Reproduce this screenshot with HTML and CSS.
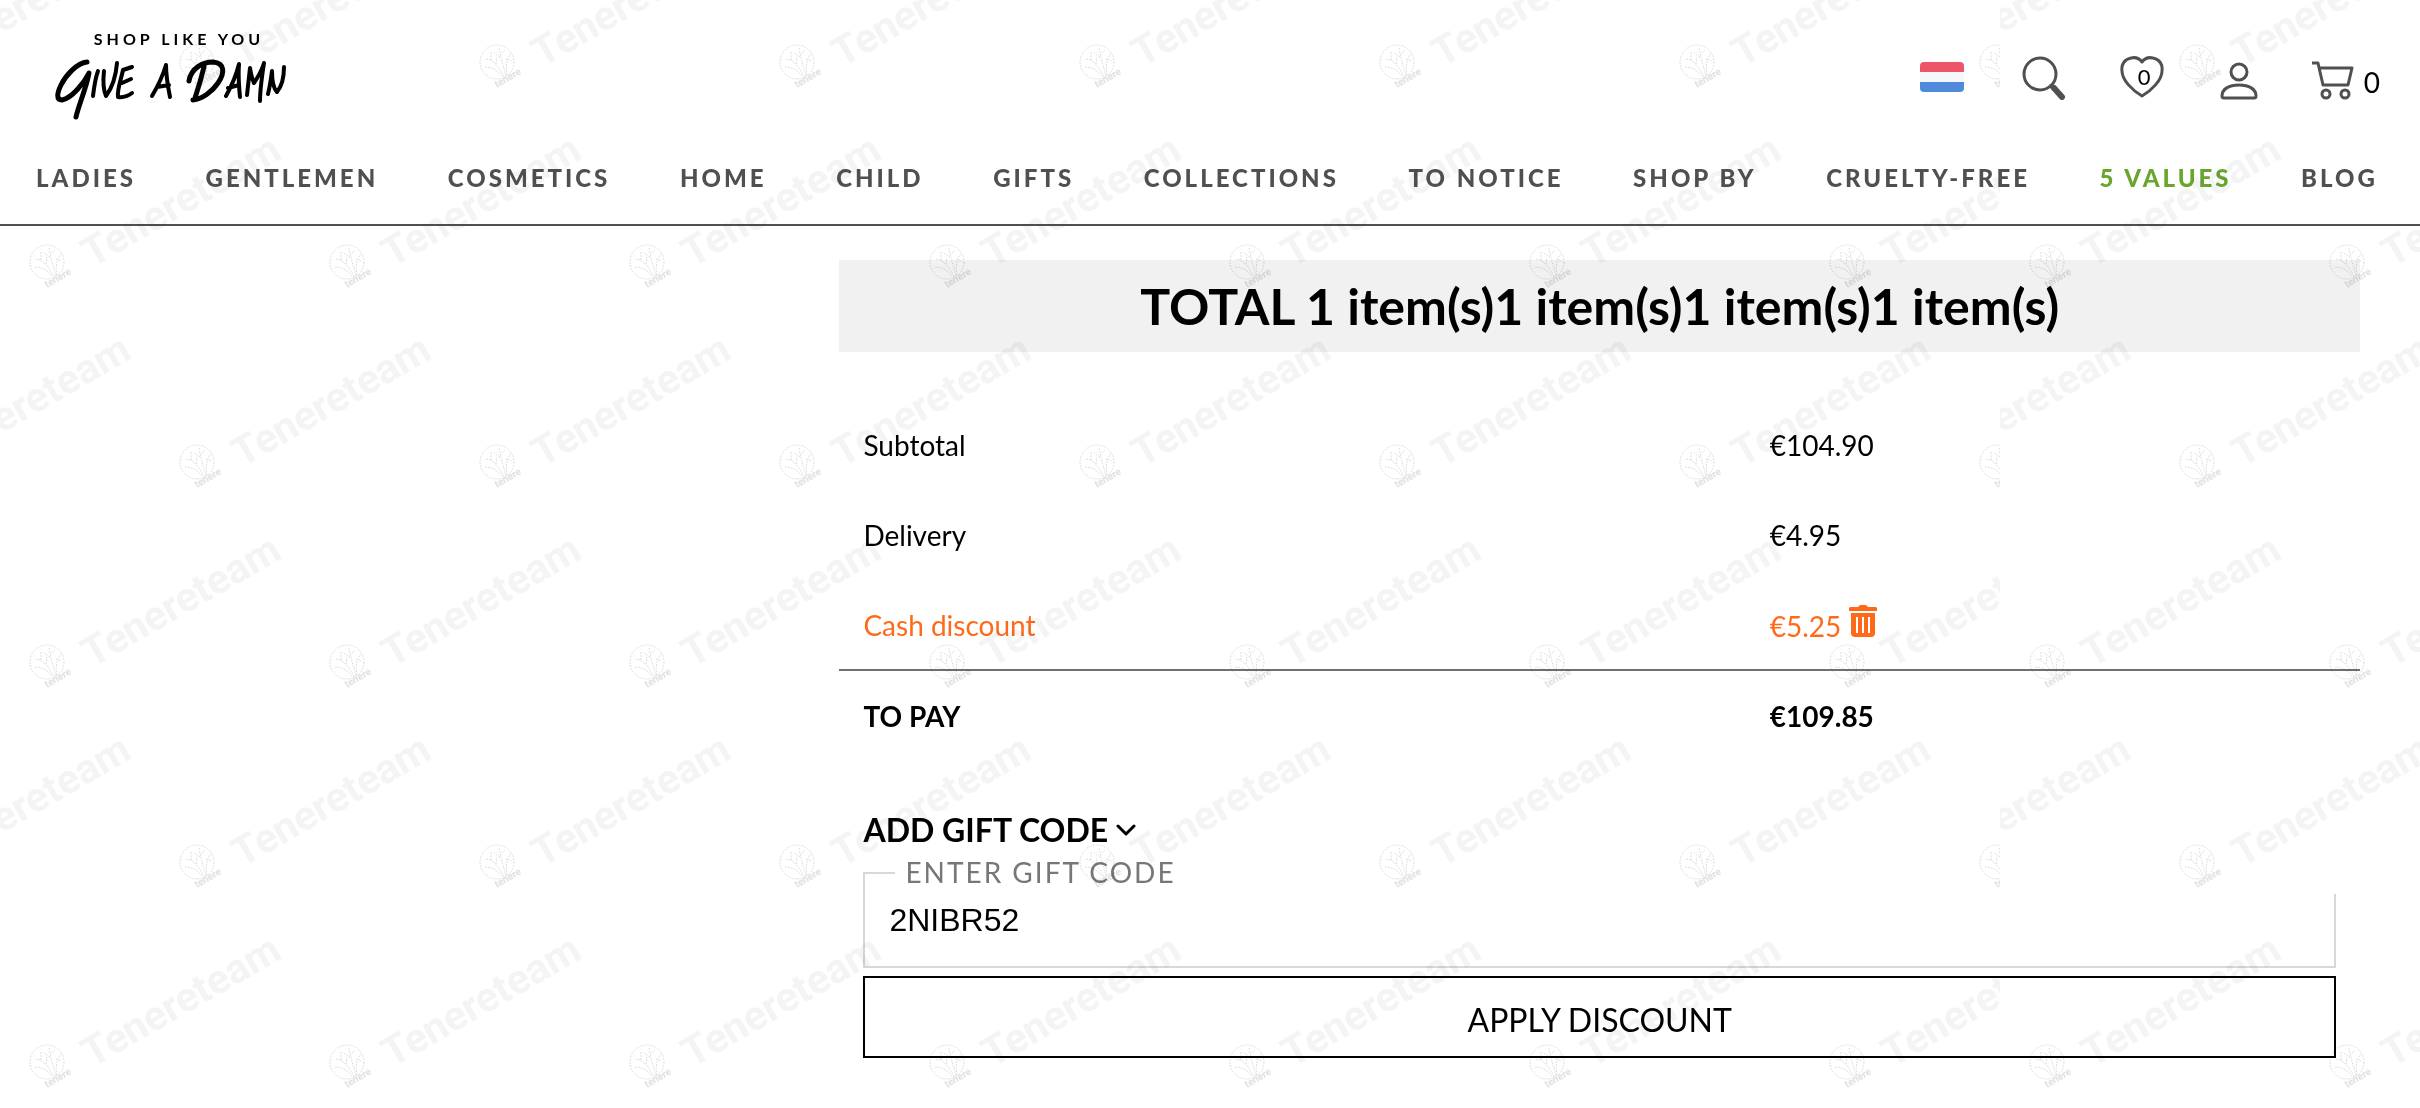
FILE: index.html
```html
<!DOCTYPE html>
<html lang="en">
<head>
    <meta charset="UTF-8">
    <meta name="viewport" content="width=device-width, initial-scale=1.0">
    <title>Give a Damn - Checkout</title>
    <link rel="stylesheet" href="styles.css">
</head>
<body>
    <header class="header">
        <div class="topbar">
            <a class="logo" href="#" aria-label="Shop like you give a damn">
                <span class="logo-small">SHOP LIKE YOU</span>
                <svg class="logo-mark" viewBox="0 0 240 64" aria-hidden="true">
                    <g fill="none" stroke="#000" stroke-width="4" stroke-linecap="round" stroke-linejoin="round">
                        <path stroke-width="5" d="M35 4C25 5 14 17 9 27C5 35 4 42 10 42C20 40 32 25 37 15C34 31 27 46 24 59"/>
                        <path d="M46 13C43 21 42 30 41 38M52 13C51 22 51 31 54 38C60 30 64 17 65 5M80 9L71 12C69 22 65 31 66 39C72 40 76 38 80 35M70 25L79 21"/>
                        <path d="M100 38C106 28 111 17 114 7C114 18 116 29 118 39M105 29L117 27"/>
                        <path stroke-width="5" d="M152 9C149 21 146 31 143 40M137 23C139 10 151 4 161 4C173 5 173 15 166 25C160 34 150 41 141 42"/>
                        <path d="M174 38C179 29 184 18 187 6C186 18 187 29 188 39M176 30L187 27M195 37C196 28 197 19 198 10C199 16 200 21 202 25C206 19 210 12 212 5C210 18 208 31 208 43M216 36C218 28 219 21 220 13C220 21 221 30 225 34C230 28 232 19 232 9"/>
                    </g>
                </svg>
            </a>
            <div class="tools">
                <a class="tool language" href="#" aria-label="Language">
                    <svg width="44" height="30" viewBox="0 0 44 30">
                        <rect width="44" height="30" rx="4" fill="#f5f7fb"/>
                        <path d="M0 10V4a4 4 0 0 1 4-4h36a4 4 0 0 1 4 4v6z" fill="#ec5668"/>
                        <path d="M0 20v6a4 4 0 0 0 4 4h36a4 4 0 0 0 4-4v-6z" fill="#4f8adb"/>
                    </svg>
                </a>
                <a class="tool" href="#" aria-label="Search">
                    <svg width="48" height="44" viewBox="0 0 48 44" fill="none" stroke="#505050" stroke-linecap="round">
                        <circle cx="22" cy="18" r="16" stroke-width="3"/>
                        <path d="M33 30l3 3" stroke-width="4"/>
                        <path d="M36 32l8 9" stroke-width="6"/>
                    </svg>
                </a>
                <a class="tool wishlist" href="#" aria-label="Wishlist">
                    <svg width="44" height="42" viewBox="0 0 44 42" fill="none" stroke="#505050" stroke-width="3" stroke-linejoin="round">
                        <path d="M22 6C19 2 15 1 11 2C5 3 1 8 2 15C2 24 12 34 22 40C32 34 42 24 42 15C43 8 39 3 33 2C29 1 25 2 22 6z"/>
                    </svg>
                    <span class="wishlist-count">0</span>
                </a>
                <a class="tool" href="#" aria-label="Account">
                    <svg width="40" height="38" viewBox="0 0 40 38" fill="none" stroke="#505050" stroke-width="3" stroke-linejoin="round">
                        <circle cx="21" cy="10" r="8"/>
                        <path d="M4 34C4 27 11 23 21 23C31 23 38 27 38 34C38 36 37 36 36 36H6C5 36 4 36 4 34z"/>
                    </svg>
                </a>
                <a class="tool cart" href="#" aria-label="Cart">
                    <svg width="44" height="39" viewBox="0 0 44 39" fill="none" stroke="#505050" stroke-width="3" stroke-linejoin="round">
                        <path d="M0 2H6L11 24H36L40 7H8"/>
                        <circle cx="14" cy="33" r="4"/>
                        <circle cx="33" cy="33" r="4"/>
                    </svg>
                    <span>0</span>
                </a>
            </div>
        </div>
        <nav class="nav">
            <a href="#">LADIES</a>
            <a href="#">GENTLEMEN</a>
            <a href="#">COSMETICS</a>
            <a href="#">HOME</a>
            <a href="#">CHILD</a>
            <a href="#">GIFTS</a>
            <a href="#">COLLECTIONS</a>
            <a href="#">TO NOTICE</a>
            <a href="#">SHOP BY</a>
            <a href="#">CRUELTY-FREE</a>
            <a class="values" href="#">5 VALUES</a>
            <a href="#">BLOG</a>
        </nav>
    </header>

    <main class="summary">
        <h1>TOTAL 1 item(s)1 item(s)1 item(s)1 item(s)</h1>

        <table class="totals">
            <tr>
                <th scope="row">Subtotal</th>
                <td>€104.90</td>
            </tr>
            <tr>
                <th scope="row">Delivery</th>
                <td>€4.95</td>
            </tr>
            <tr class="discount">
                <th scope="row">Cash discount</th>
                <td>€5.25
                    <button class="remove" type="button" aria-label="Remove discount">
                        <svg width="28" height="32" viewBox="0 0 28 32" fill="#ff6a1a">
                            <path d="M1 2h8l2-2h6l2 2h8l1 1v3H0V3z"/>
                            <path fill-rule="evenodd" d="M2 8h24v20a4 4 0 0 1-4 4H6a4 4 0 0 1-4-4zM7 12v16h2V12zM13 12v16h2V12zM19 12v16h2V12z"/>
                        </svg>
                    </button>
                </td>
            </tr>
            <tr class="pay">
                <th scope="row">TO PAY</th>
                <td>€109.85</td>
            </tr>
        </table>

        <form class="gift">
            <button class="gift-toggle" type="button">ADD GIFT CODE
                <svg width="20" height="12" viewBox="0 0 20 12" fill="none" stroke="#000" stroke-width="3" stroke-linecap="round" stroke-linejoin="round">
                    <path d="M2 2l8 8 8-8"/>
                </svg>
            </button>
            <div class="field">
                <label for="giftCode">ENTER GIFT CODE</label>
                <input type="text" id="giftCode" value="2NIBR52">
            </div>
            <button class="apply" type="button">APPLY DISCOUNT</button>
        </form>
    </main>

    <div class="watermark" aria-hidden="true">
        <svg width="100%" height="100%">
            <defs>
                <g id="stamp">
                    <g fill="none" stroke="#dedede">
                        <circle r="17" stroke-dasharray="2 1"/>
                        <path stroke-dasharray="2 1" d="M7 15C4 8 0 3-6-2M9 14C7 6 4-2 2-14M10 13C8 5 10-4 14-8M5 14C0 8-5 5-12 5M-6-2L-12-3M-6-2L-6-10M3-5L-3-9M3-7L8-12M9-3L15-1M-1 2L0-5"/>
                    </g>
                    <text class="stamp-small" transform="translate(0 26) rotate(-30)">tenere</text>
                    <text class="stamp-text" transform="translate(45 6) rotate(-30)">Tenereteam</text>
                </g>
                <pattern id="tile" width="300" height="400" patternUnits="userSpaceOnUse">
                    <use href="#stamp" x="47" y="262"/>
                    <use href="#stamp" x="197" y="62"/>
                    <use href="#stamp" x="-103" y="62"/>
                    <use href="#stamp" x="197" y="462"/>
                    <use href="#stamp" x="-103" y="462"/>
                </pattern>
            </defs>
            <rect width="100%" height="100%" fill="url(#tile)"/>
        </svg>
        <svg width="100%" height="100%">
            <rect width="100%" height="100%" fill="url(#tile)"/>
        </svg>
    </div>
</body>
</html>
```

FILE: styles.css
```css
* {
    box-sizing: border-box;
}
body {
    position: relative;
    min-height: 100vh;
    margin: 0;
    background-color: #fff;
    color: #000;
    font-family: Lato, "Open Sans", sans-serif;
    font-size: 28px;
    line-height: 36px;
}
a {
    color: inherit;
    text-decoration: none;
}
button {
    padding: 0;
    border: none;
    background: none;
    color: inherit;
    font-family: inherit;
    cursor: pointer;
}
.header {
    border-bottom: 2px solid #505050;
}
.topbar {
    display: flex;
    justify-content: space-between;
    height: 124px;
    padding: 30px 40px 24px 52px;
}
.logo {
    display: flex;
    flex-direction: column;
    width: 240px;
}
.logo-small {
    padding-left: 14px;
    font-size: 16px;
    line-height: 18px;
    font-weight: bold;
    letter-spacing: 4px;
    text-align: center;
}
.logo-mark {
    flex-shrink: 0;
    width: 240px;
    height: 64px;
    margin-top: 10px;
}
.tools {
    display: flex;
    align-items: flex-end;
    gap: 54px;
}
.tool {
    display: flex;
    align-items: flex-end;
}
.language {
    padding-bottom: 8px;
}
.wishlist {
    position: relative;
    padding-bottom: 2px;
}
.wishlist-count {
    position: absolute;
    left: 18px;
    top: 3px;
    font-size: 22px;
}
.cart {
    gap: 8px;
}
.nav {
    display: flex;
    justify-content: space-between;
    padding: 36px 42px 28px 36px;
    color: #505050;
    font-size: 24px;
    font-weight: 900;
    letter-spacing: 3px;
}
.values {
    color: #6aa52d;
}
.summary {
    width: 63%;
    margin: 34px 60px 0 auto;
    padding-left: 4px;
}
h1 {
    margin: 0;
    padding: 20px;
    background-color: #f1f1f1;
    font-size: 50px;
    line-height: 52px;
    text-align: center;
}
.totals {
    width: 100%;
    margin-top: 48px;
    border-collapse: collapse;
}
.totals th, .totals td {
    height: 90px;
    padding: 0 24px;
    font-weight: normal;
    text-align: left;
}
.totals td {
    width: 40%;
    padding-left: 18px;
}
.totals .discount {
    border-bottom: 2px solid #707070;
    color: #ff6a1a;
}
.totals .pay th, .totals .pay td {
    font-weight: bold;
}
.gift {
    padding: 0 24px;
}
.gift-toggle {
    display: flex;
    align-items: center;
    gap: 8px;
    margin-top: 50px;
    font-size: 32px;
    line-height: 40px;
    font-weight: bold;
}
.field {
    position: relative;
    margin-top: 22px;
}
/* the label covers the top edge of the field */
.field label {
    position: absolute;
    left: 32px;
    right: 0;
    top: -18px;
    height: 40px;
    padding: 0 10px;
    background-color: #fff;
    color: #777;
    letter-spacing: 2px;
}
.field input {
    display: block;
    width: 100%;
    height: 96px;
    padding: 0 24px;
    border: 2px solid #d8d8d8;
    background: none;
    color: #000;
    font-family: "Liberation Sans", Arial, sans-serif;
    font-size: 32px;
}
.apply {
    display: block;
    width: 100%;
    height: 82px;
    padding-top: 4px;
    margin-top: 8px;
    border: 2px solid #000;
    font-size: 32px;
}
.watermark {
    position: absolute;
    inset: 0;
    display: grid;
    grid-template-columns: 2000px 1fr;
    overflow: hidden;
    pointer-events: none;
    mix-blend-mode: multiply;
}
.stamp-text {
    fill: #f4f4f4;
    font-family: Roboto, sans-serif;
    font-size: 41px;
    font-weight: bold;
}
.stamp-small {
    fill: #e0e0e0;
    font-family: Roboto, sans-serif;
    font-size: 10px;
    font-weight: bold;
}
```
